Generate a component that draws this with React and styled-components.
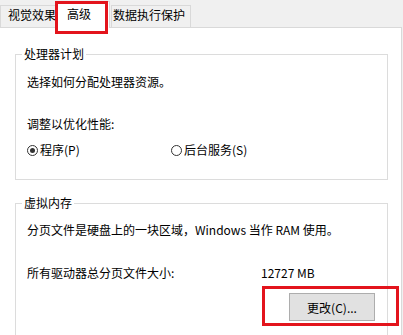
import React from 'react'
import styled, { createGlobalStyle } from 'styled-components'

const red = `#e3141c`
const line = `#dcdcdc`

const Global = createGlobalStyle`
  html, body {
    margin: 0;
    padding: 0;
    background: #f0f0f0;
  }
  body {
    font-family: 'Noto Sans CJK SC', 'Microsoft YaHei', sans-serif;
    font-size: 12px;
    color: #000;
  }
`

const Window = styled.div`
  width: 403px;
  height: 335px;
  display: flex;
  flex-direction: column;
  overflow: hidden;
  background: #f0f0f0;
`

const TabStrip = styled.div`
  height: 27px;
  display: flex;
  align-items: flex-end;
  flex-shrink: 0;
`

const Tab = styled.div`
  position: relative;
  box-sizing: border-box;
  width: ${p => p.$width}px;
  padding-left: ${p => p.$pad}px;
  margin-left: ${p => p.$offset || 0}px;
  height: ${p => (p.$active ? 27 : 22)}px;
  padding-top: ${p => (p.$active ? 3 : 0)}px;
  line-height: 18px;
  white-space: nowrap;
  border: 1px solid #d9d9d9;
  border-bottom: none;
  background: ${p => (p.$active ? '#fff' : '#f0f0f0')};
  margin-bottom: ${p => (p.$active ? -1 : 0)}px;
  z-index: ${p => (p.$active ? 2 : 1)};

  ${p =>
    p.$marked &&
    `
    &::after {
      content: '';
      position: absolute;
      left: -2px;
      right: 1px;
      top: -1px;
      bottom: -6px;
      border: 3px solid ${red};
    }
  `}
`

const Panel = styled.div`
  flex: 1;
  width: 402px;
  box-sizing: border-box;
  background: #fff;
  border-top: 1px solid #d9d9d9;
  border-right: 1px solid #d9d9d9;
  padding: 18px 0 0 15px;
  display: flex;
  flex-direction: column;
  gap: 15px;
`

const Group = styled.fieldset`
  margin: 0;
  width: 373px;
  box-sizing: border-box;
  border: 1px solid ${line};
  padding: ${p => p.$top}px 12px ${p => p.$bottom}px 11px;
  min-width: 0;
  flex-shrink: 0;
`

const Legend = styled.legend`
  padding: 0 2px;
  margin-left: -5px;
  line-height: 16px;
`

const Text = styled.div`
  line-height: 16px;
  margin-top: ${p => p.$gap || 0}px;
  white-space: nowrap;
`

const RadioRow = styled.div`
  display: grid;
  grid-template-columns: 144px auto;
  margin-top: 10px;
  line-height: 16px;
`

const RadioItem = styled.label`
  display: flex;
  align-items: center;
  gap: 2px;
  white-space: nowrap;
`

const RadioDot = styled.span`
  width: 11px;
  height: 11px;
  box-sizing: border-box;
  border: 1px solid #333;
  border-radius: 50%;
  display: flex;
  align-items: center;
  justify-content: center;

  &::after {
    content: '';
    width: 5px;
    height: 5px;
    border-radius: 50%;
    background: ${p => (p.$checked ? '#333' : 'transparent')};
  }
`

const SizeRow = styled.div`
  display: grid;
  grid-template-columns: 234px auto;
  line-height: 16px;
  margin-top: 27px;
  white-space: nowrap;
`

const ButtonRow = styled.div`
  display: flex;
  justify-content: flex-end;
  margin-top: 12px;
`

const ButtonWrap = styled.div`
  position: relative;

  &::after {
    content: '';
    position: absolute;
    left: -27px;
    right: -24px;
    top: -7px;
    bottom: -5px;
    border: 3px solid ${red};
    pointer-events: none;
  }
`

const Button = styled.button`
  width: 86px;
  height: 28px;
  box-sizing: border-box;
  background: #e1e1e1;
  border: 1px solid #adadad;
  font-family: inherit;
  font-size: 12px;
  color: #000;
  padding: 0;
`

const Radio = ({ checked, children }) => (
  <RadioItem>
    <RadioDot $checked={checked} />
    {children}
  </RadioItem>
)

export default function App() {
  return (
    <Window>
      <Global />
      <TabStrip>
        <Tab $width={57} $pad={7}>视觉效果</Tab>
        <Tab $width={54} $pad={10} $offset={-1} $active $marked>高级</Tab>
        <Tab $width={80} $pad={1} $offset={1}>数据执行保护</Tab>
      </TabStrip>
      <Panel>
        <Group $top={12} $bottom={21}>
          <Legend>处理器计划</Legend>
          <Text>选择如何分配处理器资源。</Text>
          <Text $gap={26}>调整以优化性能:</Text>
          <RadioRow>
            <Radio checked>程序(P)</Radio>
            <Radio>后台服务(S)</Radio>
          </RadioRow>
        </Group>
        <Group $top={11} $bottom={40}>
          <Legend>虚拟内存</Legend>
          <Text>分页文件是硬盘上的一块区域，Windows 当作 RAM 使用。</Text>
          <SizeRow>
            <span>所有驱动器总分页文件大小:</span>
            <span>12727 MB</span>
          </SizeRow>
          <ButtonRow>
            <ButtonWrap>
              <Button>更改(C)...</Button>
            </ButtonWrap>
          </ButtonRow>
        </Group>
      </Panel>
    </Window>
  )
}
